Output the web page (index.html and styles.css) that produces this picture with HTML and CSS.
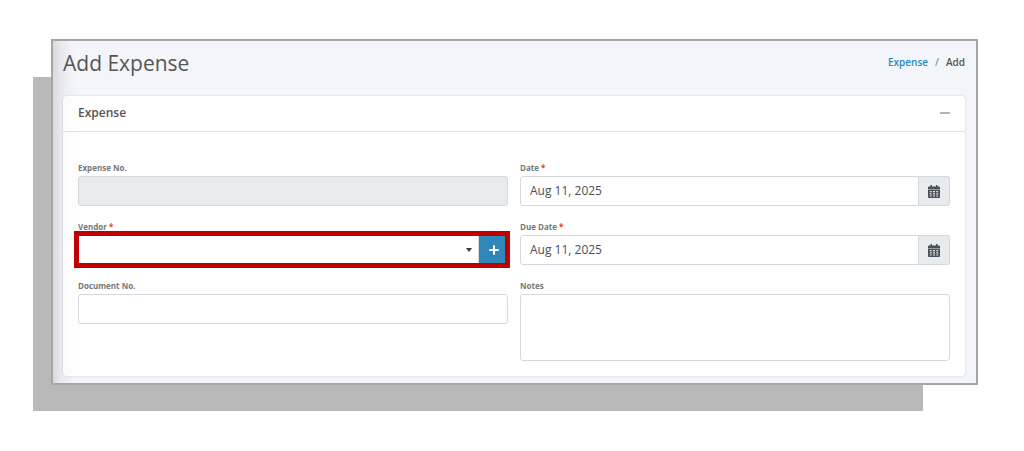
FILE: index.html
```html
<!DOCTYPE html>
<html lang="en">
<head>
    <meta charset="UTF-8">
    <meta name="viewport" content="width=device-width, initial-scale=1.0">
    <title>Add Expense</title>
    <link rel="stylesheet" href="styles.css">
</head>
<body>
    <main class="panel">
        <header class="page-header">
            <h1>Add Expense</h1>
            <nav class="breadcrumb">
                <a href="#">Expense</a>
                <span class="slash">/</span>
                <span>Add</span>
            </nav>
        </header>

        <section class="card">
            <div class="card-header">
                <h2>Expense</h2>
                <button type="button" class="collapse" aria-label="Collapse"></button>
            </div>

            <form class="card-body">
                <div class="field">
                    <label for="expenseNo">Expense No.</label>
                    <input type="text" id="expenseNo" class="control" disabled>
                </div>

                <div class="field">
                    <label for="date">Date <span class="required">*</span></label>
                    <div class="input-group">
                        <input type="text" id="date" class="control" value="Aug 11, 2025">
                        <button type="button" class="calendar" aria-label="Pick date">
                            <svg viewBox="0 0 12 13" width="12" height="13">
                                <path fill="#495057" fill-rule="evenodd" d="M2.500 0H4v1.500h4V0h1.500v1.500H11a1 1 0 0 1 1 1V4H0V2.500a1 1 0 0 1 1-1h1.500zM0 4.500h12V12a1 1 0 0 1-1 1H1a1 1 0 0 1-1-1zM1.800 6v1.200h1.900V6zM5 6v1.200h2V6zM8.300 6v1.200h1.900V6zM1.800 8.300v1.200h1.900V8.300zM5 8.300v1.200h2V8.300zM8.300 8.300v1.200h1.900V8.300zM1.800 10.600v1h1.900v-1zM5 10.600v1h2v-1zM8.300 10.600v1h1.900v-1z"/>
                            </svg>
                        </button>
                    </div>
                </div>

                <div class="field">
                    <label for="vendor">Vendor <span class="required">*</span></label>
                    <div class="input-group highlight">
                        <select id="vendor" class="control">
                            <option></option>
                        </select>
                        <svg class="caret" viewBox="0 0 6 4" width="6" height="4"><path fill="#343a40" d="M0 0h6L3 4z"/></svg>
                        <button type="button" class="add" aria-label="Add vendor">
                            <svg viewBox="0 0 10 10" width="10" height="10"><path stroke="#fff" stroke-width="2" stroke-linecap="round" d="M5 1v8M1 5h8"/></svg>
                        </button>
                    </div>
                </div>

                <div class="field">
                    <label for="dueDate">Due Date <span class="required">*</span></label>
                    <div class="input-group">
                        <input type="text" id="dueDate" class="control" value="Aug 11, 2025">
                        <button type="button" class="calendar" aria-label="Pick due date">
                            <svg viewBox="0 0 12 13" width="12" height="13">
                                <path fill="#495057" fill-rule="evenodd" d="M2.500 0H4v1.500h4V0h1.500v1.500H11a1 1 0 0 1 1 1V4H0V2.500a1 1 0 0 1 1-1h1.500zM0 4.500h12V12a1 1 0 0 1-1 1H1a1 1 0 0 1-1-1zM1.800 6v1.200h1.900V6zM5 6v1.200h2V6zM8.300 6v1.200h1.900V6zM1.800 8.300v1.200h1.900V8.300zM5 8.300v1.200h2V8.300zM8.300 8.300v1.200h1.900V8.300zM1.800 10.600v1h1.900v-1zM5 10.600v1h2v-1zM8.300 10.600v1h1.900v-1z"/>
                            </svg>
                        </button>
                    </div>
                </div>

                <div class="field">
                    <label for="documentNo">Document No.</label>
                    <input type="text" id="documentNo" class="control">
                </div>

                <div class="field">
                    <label for="notes">Notes</label>
                    <textarea id="notes" class="control"></textarea>
                </div>
            </form>
        </section>
    </main>
</body>
</html>
```
FILE: styles.css
```css
* {
    box-sizing: border-box;
}
body {
    margin: 0;
    padding: 39px 46px 40px 51px;
    background-color: #fff;
    color: #555;
    font-family: "Trebuchet MS", "Open Sans", sans-serif;
    font-size: 10px;
}
.panel {
    position: relative;
    padding: 0 11px 7px 10px;
    border: 2px solid #a6a6a6;
    background: linear-gradient(to right, #d8dade, #e8e9ee 8px, #f4f5fa 22px);
}
/* Flat grey block behind the panel */
.panel::before {
    content: "";
    position: absolute;
    z-index: -1;
    top: 36px;
    right: 53px;
    bottom: -28px;
    left: -20px;
    background-color: #b9b9b9;
}
.page-header {
    display: flex;
    justify-content: space-between;
    height: 55px;
}
h1 {
    margin: 0;
    font-size: 21px;
    font-weight: 500;
    line-height: 45px;
}
.breadcrumb {
    display: flex;
    gap: 7px;
    font-weight: 600;
    line-height: 42px;
}
.breadcrumb a {
    color: #2589bd;
    text-decoration: none;
}
.slash {
    color: #868e96;
}
.card {
    border-radius: 4px;
    background: linear-gradient(to right, #fbfbfb, #fff 20px);
    box-shadow: 0 0 2px rgba(0, 0, 0, 0.2);
}
.card-header {
    display: flex;
    align-items: center;
    justify-content: space-between;
    height: 36px;
    padding: 0 15px 2px;
    border-bottom: 1px solid #dfe1e3;
}
h2 {
    margin: 0;
    font-size: 12px;
    font-weight: 600;
}
.collapse {
    width: 10px;
    height: 2px;
    padding: 0;
    border: none;
    background-color: #adb5bd;
    cursor: pointer;
}
.card-body {
    display: grid;
    grid-template-columns: 1fr 1fr;
    gap: 15px 12px;
    padding: 30px 15px 15px;
}
.field {
    display: flex;
    flex-direction: column;
    gap: 2px;
    min-width: 0;
}
label {
    color: #777;
    font-size: 8px;
    font-weight: 700;
    line-height: 12px;
}
.required {
    color: #f03e2d;
}
.control {
    width: 100%;
    height: 30px;
    padding: 0 9px 2px;
    border: 1px solid #d5d9df;
    border-radius: 3px;
    background-color: #fff;
    color: #495057;
    font-family: inherit;
    font-size: 12px;
    font-weight: 500;
}
.control:disabled {
    background-color: #e7ebee;
}
textarea.control {
    height: 67px;
    padding: 6px 9px;
    resize: none;
}
select.control {
    appearance: none;
}
.input-group {
    position: relative;
    display: flex;
}
.input-group .control {
    flex: 1;
    min-width: 0;
    border-radius: 3px 0 0 3px;
}
.calendar,
.add {
    display: flex;
    align-items: center;
    justify-content: center;
    width: 31px;
    padding: 0;
    border: 1px solid #d5d9df;
    border-left: none;
    border-radius: 0 3px 3px 0;
    background-color: #e7ebee;
    cursor: pointer;
}
.add {
    width: 29px;
    border: none;
    background-color: #2f86b8;
}
.caret {
    position: absolute;
    top: 13px;
    right: 36px;
    pointer-events: none;
}
/* Red frame around the vendor picker */
.highlight::after {
    content: "";
    position: absolute;
    inset: -4px -2px -3px -4px;
    border: 5px solid #c00000;
    pointer-events: none;
}
```
